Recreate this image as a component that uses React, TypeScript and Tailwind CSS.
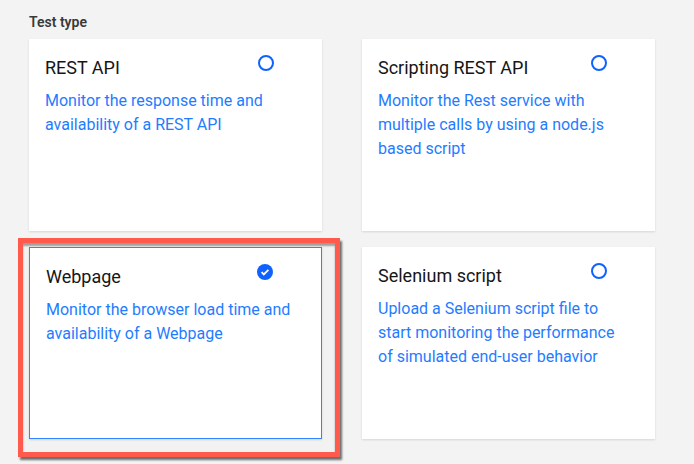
const tiles = [
  { title: 'REST API', desc: 'Monitor the response time and availability of a REST API' },
  { title: 'Scripting REST API', desc: 'Monitor the Rest service with multiple calls by using a node.js based script' },
  { title: 'Webpage', desc: 'Monitor the browser load time and availability of a Webpage' },
  { title: 'Selenium script', desc: 'Upload a Selenium script file to start monitoring the performance of simulated end-user behavior' },
];

function Radio({ checked }: { checked: boolean }) {
  if (checked) {
    return (
      <svg width="16" height="16" viewBox="0 0 16 16" className="shrink-0">
        <circle cx="8" cy="8" r="8" fill="#0f62fe" />
        <path d="M4.6 8.2l2.2 2.2 4.6-4.6" fill="none" stroke="#fff" strokeWidth="1.8" />
      </svg>
    );
  }
  return (
    <svg width="16" height="16" viewBox="0 0 16 16" className="shrink-0">
      <circle cx="8" cy="8" r="7" fill="none" stroke="#0f62fe" strokeWidth="2" />
    </svg>
  );
}

function Tile({ title, desc, checked = false }: { title: string; desc: string; checked?: boolean }) {
  return (
    <div
      className={
        'w-[293px] h-[192px] bg-white pl-[16px] pr-[16px] pt-[16px] shadow-[0_1px_2px_rgba(0,0,0,0.12)] ' +
        (checked ? 'border border-[#2f86ff] pl-[15px] pr-[15px] pt-[15px]' : '')
      }
    >
      <div className="flex items-start justify-between pr-[32px]">
        <div className="text-[18px] leading-[26px] text-[#161616]">{title}</div>
        <Radio checked={checked} />
      </div>
      <p className="mt-[8px] pr-[12px] text-[16px] leading-[24px] text-[#1f7cff]">{desc}</p>
    </div>
  );
}

export default function App() {
  return (
    <div className="w-[694px] h-[464px] bg-[#f3f3f3] overflow-hidden font-['Roboto',sans-serif]">
      <div className="pl-[29px] pt-[12px] text-[14px] font-semibold text-[#393939] leading-[20px]">Test type</div>
      <div className="flex gap-[40px] pl-[29px] mt-[7px]">
        <Tile {...tiles[0]} />
        <Tile {...tiles[1]} />
      </div>
      <div className="flex items-start mt-[7px] pl-[18px]">
        <div className="border-[5px] border-[#ff5a4c] bg-[#f2f2f2] pl-[6px] pt-[4px] pr-[13px] pb-[13px] shadow-[2px_3px_2px_rgba(0,0,0,0.55),inset_0_3px_2px_rgba(0,0,0,0.35)]">
          <Tile {...tiles[2]} checked />
        </div>
        <div className="ml-[22px] mt-[9px]">
          <Tile {...tiles[3]} />
        </div>
      </div>
    </div>
  );
}
